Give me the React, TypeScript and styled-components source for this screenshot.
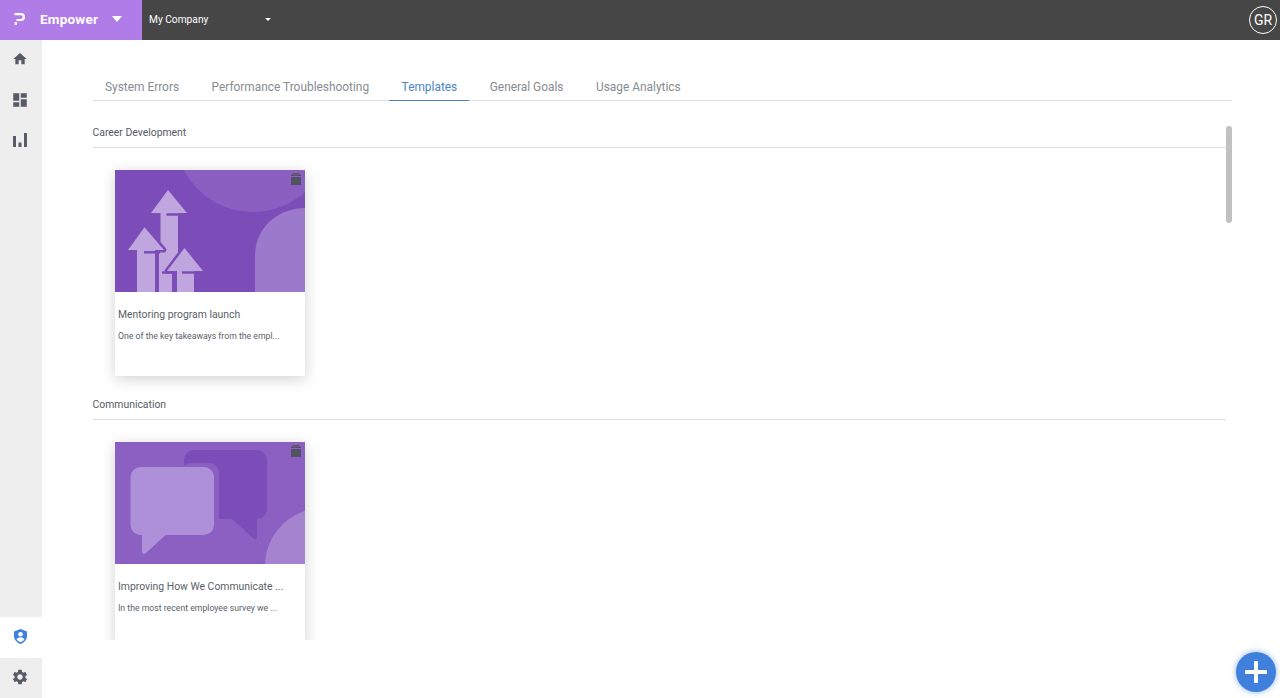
import styled, { createGlobalStyle } from "styled-components";
import { MdDashboard, MdHome, MdSettings } from "react-icons/md";

const tabs = ["System Errors", "Performance Troubleshooting", "Templates", "General Goals", "Usage Analytics"];

const TrashIcon = () => (
  <svg width="10" height="12" viewBox="0 0 10 12" fill="currentColor">
    <path d="M2.500 0h5l.5 1H2z" />
    <rect y="1.500" width="10" height="1.500" />
    <rect y="4" width="10" height="8" rx="0.500" />
  </svg>
);

export default function App() {
  return (
    <Page>
      <GlobalStyle />
      <Header>
        <Brand>
          <svg width="11" height="12" viewBox="0 0 11 12" fill="none" stroke="#fff" strokeWidth="2.200">
            <path d="M0.500 1.200H7a2.900 2.900 0 0 1 0 5.800H2.500" />
            <path d="M1.800 9v3" />
          </svg>
          <BrandName>Empower</BrandName>
          <Caret size={5.5} height={6.5} />
        </Brand>
        <CompanySelect>
          <span>My Company</span>
          <Caret size={3} height={3} />
        </CompanySelect>
        <Avatar>GR</Avatar>
      </Header>
      <Body>
        <Sidebar>
          <NavItem><MdHome size={16} /></NavItem>
          <NavItem><MdDashboard size={18} /></NavItem>
          <NavItem>
            <svg width="14" height="14" viewBox="0 0 14 14" fill="currentColor">
              <rect y="3" width="3" height="11" />
              <rect x="5.500" y="9.500" width="3" height="4.500" />
              <rect x="11" width="3" height="14" />
            </svg>
          </NavItem>
          <NavSpacer />
          <NavItem $active>
            <svg width="13" height="15" viewBox="0 0 13 15">
              <path fill="#3f80dd" d="M6.500 0 13 2.400v4.400c0 3.700-2.700 6.900-6.500 8.200C2.700 13.700 0 10.500 0 6.800V2.400z" />
              <circle cx="6.500" cy="5.200" r="2.300" fill="#fff" />
              <path fill="#fff" d="M2.500 10.200c.9-1.300 2.400-2 4-2s3.100.7 4 2c-.9 1.300-2.300 2.400-4 3.100-1.700-.7-3.100-1.800-4-3.100z" />
            </svg>
          </NavItem>
          <NavItem $shaded><MdSettings size={18} /></NavItem>
        </Sidebar>
        <Main>
          <TabBar>
            {tabs.map((tab) => (
              <Tab key={tab} $active={tab === "Templates"}>{tab}</Tab>
            ))}
          </TabBar>
          <ScrollArea>
            <Section>
              <SectionTitle>Career Development</SectionTitle>
              <Card>
                <CardArt>
                  <svg width="100%" height="100%" viewBox="0 0 190.500 122" preserveAspectRatio="none">
                    <rect width="190.500" height="122" fill="#7c4db8" />
                    <circle cx="138" cy="-36" r="78" fill="#8a5fc1" />
                    <path d="M140 122V86c0-28 22-48 50.500-48v84z" fill="#9c7acb" />
                    <g fill="#c0a6de">
                      <path d="M53 20 72 43H36z" />
                      <path d="M45.500 42H63v54H45.500z" />
                      <path d="M44 78h10v44H44z" />
                      <path d="M47 100h10v22H47z" />
                    </g>
                    <path d="M29.500 57.300 49 80H13z" fill="#c0a6de" stroke="#7c4db8" strokeWidth="5" strokeLinejoin="round" paintOrder="stroke" />
                    <path d="M22 80h18v42H22z" fill="#c0a6de" />
                    <path d="M69.500 78 88 101H52z" fill="#c0a6de" stroke="#7c4db8" strokeWidth="5" strokeLinejoin="round" paintOrder="stroke" />
                    <path d="M62 101h17v21H62z" fill="#c0a6de" />
                    <path d="M51.500 44.500H64M29 82.300h16M42 82v40M47 102.500h13.500M67 102.500h12M59.500 102v20" stroke="#7c4db8" strokeWidth="2.500" fill="none" />
                  </svg>
                </CardArt>
                <DeleteIcon><TrashIcon /></DeleteIcon>
                <CardTitle>Mentoring program launch</CardTitle>
                <CardText>One of the key takeaways from the empl...</CardText>
              </Card>
            </Section>
            <Section>
              <SectionTitle>Communication</SectionTitle>
              <Card>
                <CardArt>
                  <svg width="100%" height="100%" viewBox="0 0 190.500 122" preserveAspectRatio="none">
                    <rect width="190.500" height="122" fill="#8c5fc3" />
                    <path d="M79 8h63a10 10 0 0 1 10 10v49a10 10 0 0 1-10 10v17c0 3-2 4-4 2l-21-19H79a10 10 0 0 1-10-10V18a10 10 0 0 1 10-10z" fill="#7c4db8" />
                    <rect x="66" y="21" width="38" height="72" rx="10" fill="#8c5fc3" />
                    <circle cx="208" cy="124" r="58" fill="#a583cf" />
                    <path d="M27 93h-1.500a10 10 0 0 1-10-10V35a10 10 0 0 1 10-10H89a10 10 0 0 1 10 10v48a10 10 0 0 1-10 10H50.500L31 111c-2 2-4 1-4-2z" fill="#ae90d8" />
                  </svg>
                </CardArt>
                <DeleteIcon><TrashIcon /></DeleteIcon>
                <CardTitle>Improving How We Communicate ...</CardTitle>
                <CardText>In the most recent employee survey we ...</CardText>
              </Card>
            </Section>
            <ScrollThumb />
          </ScrollArea>
        </Main>
      </Body>
      <AddButton>
        <svg width="22" height="22" viewBox="0 0 22 22">
          <path d="M11 1.500v19M1.500 11h19" stroke="#fff" strokeWidth="4" strokeLinecap="round" />
        </svg>
      </AddButton>
    </Page>
  );
}

const GlobalStyle = createGlobalStyle`
  html, body {
    margin: 0;
    height: 100%;
    background: #fff;
    overflow: hidden;
  }
  * {
    box-sizing: border-box;
  }
`;

const Page = styled.div`
  position: relative;
  width: 1280px;
  height: 698px;
  display: flex;
  flex-direction: column;
  font-family: "Roboto", "Liberation Sans", sans-serif;
  color: #5a5f69;
`;

const Header = styled.header`
  height: 40px;
  flex: none;
  display: flex;
  align-items: center;
  background: #464646;
  color: #fff;
`;

const Brand = styled.div`
  width: 142px;
  height: 100%;
  display: flex;
  align-items: center;
  padding: 0 0 2px 13.500px;
  background: #b07de8;
`;

const BrandName = styled.span`
  margin-left: 15.500px;
  margin-right: 14px;
  font-size: 13.500px;
  font-weight: 700;
  letter-spacing: 0.2px;
`;

const Caret = styled.span<{ size: number; height: number }>`
  width: 0;
  height: 0;
  border-left: ${(p) => p.size}px solid transparent;
  border-right: ${(p) => p.size}px solid transparent;
  border-top: ${(p) => p.height}px solid #fff;
`;

const CompanySelect = styled.div`
  width: 122px;
  margin-left: 7px;
  padding-bottom: 1px;
  display: flex;
  align-items: center;
  justify-content: space-between;
  font-size: 10.200px;
  font-weight: 400;
`;

const Avatar = styled.div`
  width: 28px;
  height: 28px;
  margin-left: auto;
  margin-right: 3px;
  display: flex;
  align-items: center;
  justify-content: center;
  border: 1px solid #fff;
  border-radius: 50%;
  font-size: 14px;
`;

const Body = styled.div`
  flex: 1;
  min-height: 0;
  display: flex;
`;

const Sidebar = styled.nav`
  width: 42px;
  flex: none;
  display: flex;
  flex-direction: column;
  background: #eeeeee;
`;

const NavItem = styled.div<{ $active?: boolean; $shaded?: boolean }>`
  height: ${(p) => (p.$active ? 41 : 40.500)}px;
  flex: none;
  display: flex;
  align-items: center;
  justify-content: center;
  padding: 0 2px 2px 0;
  color: #575b66;
  background: ${(p) => (p.$active ? "#fff" : "transparent")};
`;

const NavSpacer = styled.div`
  flex: 1;
`;

const Main = styled.main`
  flex: 1;
  min-width: 0;
  padding: 30px 48px 0 50.500px;
`;

const TabBar = styled.div`
  height: 31px;
  display: flex;
  gap: 8px;
  border-bottom: 1px solid #dcdfe3;
`;

const Tab = styled.div<{ $active?: boolean }>`
  height: 31px;
  padding: 10px 12px 0 12.500px;
  font-size: 11.900px;
  line-height: 15px;
  color: ${(p) => (p.$active ? "#4a86c6" : "#878b92")};
  border-bottom: 1px solid ${(p) => (p.$active ? "#4a86c6" : "transparent")};
`;

const ScrollArea = styled.div`
  position: relative;
  height: 539px;
  padding-top: 23px;
  overflow: hidden;
`;

const Section = styled.section`
  margin-bottom: 20px;
`;

const SectionTitle = styled.h2`
  margin: 0 6px 22px 0;
  height: 24px;
  padding-top: 2px;
  font-size: 10.400px;
  font-weight: 400;
  line-height: 13px;
  color: #565b66;
  border-bottom: 1px solid #dcdfe3;
`;

const Card = styled.article`
  position: relative;
  width: 190.500px;
  height: 206px;
  margin-left: 22px;
  background: #fff;
  box-shadow: 0 3px 14px rgba(0, 0, 0, 0.18);
`;

const CardArt = styled.div`
  height: 122px;
  line-height: 0;
`;

const DeleteIcon = styled.div`
  position: absolute;
  top: 3px;
  right: 4px;
  line-height: 0;
  color: #50545f;
`;

const CardTitle = styled.h3`
  margin: 16px 0 0 3.500px;
  font-size: 10.400px;
  font-weight: 400;
  line-height: 13px;
  color: #5a5f69;
  white-space: nowrap;
`;

const CardText = styled.p`
  margin: 9px 0 0 3.500px;
  font-size: 8.700px;
  line-height: 12px;
  color: #5a5f69;
  white-space: nowrap;
`;

const ScrollThumb = styled.div`
  position: absolute;
  top: 25px;
  right: 0;
  width: 6px;
  height: 97px;
  border-radius: 3px;
  background: #c1c1c1;
`;

const AddButton = styled.button`
  position: absolute;
  left: 1236px;
  top: 652px;
  width: 40px;
  height: 40px;
  display: flex;
  align-items: center;
  justify-content: center;
  padding: 0;
  border: none;
  border-radius: 50%;
  background: #3f80dd;
  box-shadow: 0 0 6px rgba(63, 128, 221, 0.6);
`;
